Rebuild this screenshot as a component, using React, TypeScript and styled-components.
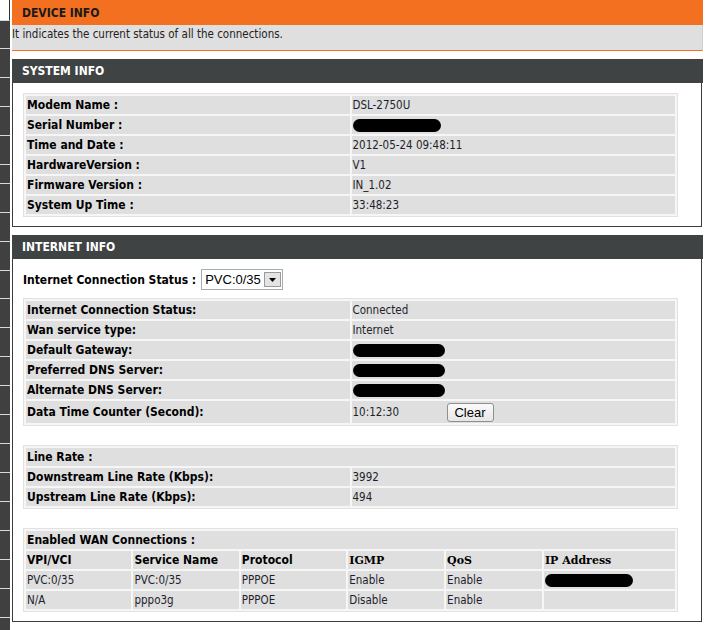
import React from 'react';
import styled, { createGlobalStyle } from 'styled-components';

const GlobalStyle = createGlobalStyle`
  html, body {
    margin: 0;
    padding: 0;
    background: #ffffff;
  }
  body {
    font-family: "DejaVu Sans Condensed", "Liberation Sans", sans-serif;
    font-size: 11.5px;
    color: #000;
  }
`;

const Page = styled.div`
  display: flex;
  align-items: flex-start;
  width: 711px;
  height: 630px;
  overflow: hidden;
`;

const Sidebar = styled.div`
  width: 10px;
  height: 630px;
  margin-right: 2px;
  background: #404040;
  display: flex;
  flex-direction: column;
`;

const NavItem = styled.div<{ $h: number; $top?: boolean }>`
  height: ${(p) => p.$h}px;
  flex: none;
  border-bottom: 1px solid #d8d8d8;
  background: ${(p) => (p.$top ? '#ffffff' : '#404040')};
  box-sizing: border-box;
  ${(p) => (p.$top ? 'border-right: 1px solid #333;' : '')}
`;

const Main = styled.div`
  width: 691px;
  display: flex;
  flex-direction: column;
`;

const TitleBar = styled.div`
  background: #f37021;
  height: 25px;
  line-height: 26px;
  padding-left: 10px;
  font-weight: bold;
  font-size: 12px;
  color: #1a1a1a;
`;

const Intro = styled.div`
  background: #dfdfdf;
  height: 26px;
  line-height: 17px;
  box-sizing: border-box;
  padding-top: 1px;
  border-bottom: 1px solid #f37021;
  border-right: 1px solid #d0d0d0;
  color: #222;
`;

const Section = styled.section`
  margin-top: 8px;
  display: flex;
  flex-direction: column;
`;

const SectionHead = styled.div`
  background: #404344;
  height: 24px;
  line-height: 25px;
  padding-left: 10px;
  font-weight: bold;
  font-size: 12px;
  color: #ffffff;
`;

const SectionBody = styled.div`
  border: 1px solid #3c3c3c;
  border-top: none;
  margin-right: 1px;
  padding: 10px 0 9px 10px;
`;

const Grid = styled.table`
  width: 655px;
  border-collapse: separate;
  border-spacing: 2px;
  background: #f6f6f6;
  border: 1px solid #e2e2e2;
  box-sizing: border-box;
  table-layout: fixed;
`;

const Cell = styled.td<{ $bold?: boolean; $serif?: boolean; $tall?: boolean }>`
  background: #dfdfdf;
  height: ${(p) => (p.$tall ? 22 : 18)}px;
  padding: 0 1px;
  box-sizing: border-box;
  white-space: nowrap;
  overflow: hidden;
  font-weight: ${(p) => (p.$bold ? 'bold' : 'normal')};
  font-family: ${(p) => (p.$serif ? '"DejaVu Serif", "Liberation Serif", serif' : 'inherit')};
  font-size: ${(p) => (p.$serif ? '11px' : p.$bold ? '12px' : '11.5px')};
  color: ${(p) => (p.$bold ? '#000' : '#1e1e2c')};
  vertical-align: middle;
`;

const Gap = styled.div`
  height: 19px;
`;

const Redacted = styled.span<{ $w: number }>`
  display: inline-block;
  width: ${(p) => p.$w}px;
  height: 13px;
  background: #000;
  border-radius: 7px;
  vertical-align: middle;
  filter: blur(0.4px);
`;

const StatusRow = styled.div`
  display: flex;
  align-items: center;
  gap: 5px;
  padding: 0 0 8px 0;
  font-weight: bold;
  font-size: 12px;
`;

const Select = styled.div`
  display: flex;
  align-items: center;
  height: 21px;
  width: 82px;
  box-sizing: border-box;
  border: 1px solid #a5acb2;
  font-family: "Liberation Sans", Arial, sans-serif;
  font-weight: normal;
  font-size: 13px;
  color: #000;
  padding-left: 3px;
  justify-content: space-between;
`;

const SelectArrow = styled.span`
  width: 17px;
  height: 15px;
  margin-right: 1px;
  background: #e4e4e4;
  border: 1px solid #9a9a9a;
  box-sizing: border-box;
  display: flex;
  align-items: center;
  justify-content: center;
`;

const ClearButton = styled.button`
  margin-left: 40px;
  height: 19px;
  width: 47px;
  padding: 0;
  font-family: "Liberation Sans", Arial, sans-serif;
  font-size: 13px;
  color: #000;
  background: linear-gradient(#fbfbfb, #e6e6e6);
  border: 1px solid #8f8f8f;
  border-radius: 3px;
  vertical-align: middle;
`;

const TimeValue = styled.span`
  display: inline-block;
  width: 54px;
`;

const systemRows: [string, React.ReactNode][] = [
  ['Modem Name :', 'DSL-2750U'],
  ['Serial Number :', <Redacted $w={88} />],
  ['Time and Date :', '2012-05-24 09:48:11'],
  ['HardwareVersion :', 'V1'],
  ['Firmware Version :', 'IN_1.02'],
  ['System Up Time :', '33:48:23'],
];

const internetRows: [string, React.ReactNode][] = [
  ['Internet Connection Status:', 'Connected'],
  ['Wan service type:', 'Internet'],
  ['Default Gateway:', <Redacted $w={92} />],
  ['Preferred DNS Server:', <Redacted $w={92} />],
  ['Alternate DNS Server:', <Redacted $w={92} />],
];

const wanRows = [
  ['PVC:0/35', 'PVC:0/35', 'PPPOE', 'Enable', 'Enable', 'ip'],
  ['N/A', 'pppo3g', 'PPPOE', 'Disable', 'Enable', ''],
];

const navHeights = [21, 28, 29, 29, 29, 29, 19, 29, 29, 29, 28, 29, 29, 29, 29, 29, 29, 29, 29, 29, 29, 29];

function App() {
  return (
    <>
      <GlobalStyle />
      <Page>
        <Sidebar>
          {navHeights.map((h, i) => (
            <NavItem key={i} $h={h} $top={i === 0} />
          ))}
        </Sidebar>
        <Main>
          <TitleBar>DEVICE INFO</TitleBar>
          <Intro>It indicates the current status of all the connections.</Intro>

          <Section>
            <SectionHead>SYSTEM INFO</SectionHead>
            <SectionBody>
              <Grid>
                <tbody>
                  {systemRows.map(([label, value]) => (
                    <tr key={label}>
                      <Cell $bold>{label}</Cell>
                      <Cell>{value}</Cell>
                    </tr>
                  ))}
                </tbody>
              </Grid>
            </SectionBody>
          </Section>

          <Section>
            <SectionHead>INTERNET INFO</SectionHead>
            <SectionBody>
              <StatusRow>
                Internet Connection Status :
                <Select>
                  PVC:0/35
                  <SelectArrow>
                    <svg width="7" height="4" viewBox="0 0 7 4">
                      <path d="M0 0h7L3.5 4z" fill="#000" />
                    </svg>
                  </SelectArrow>
                </Select>
              </StatusRow>
              <Grid>
                <tbody>
                  {internetRows.map(([label, value]) => (
                    <tr key={label}>
                      <Cell $bold>{label}</Cell>
                      <Cell>{value}</Cell>
                    </tr>
                  ))}
                  <tr>
                    <Cell $bold $tall>Data Time Counter (Second):</Cell>
                    <Cell $tall>
                      <TimeValue>10:12:30</TimeValue>
                      <ClearButton type="button">Clear</ClearButton>
                    </Cell>
                  </tr>
                </tbody>
              </Grid>
              <Gap />
              <Grid>
                <tbody>
                  <tr>
                    <Cell $bold colSpan={2}>Line Rate :</Cell>
                  </tr>
                  <tr>
                    <Cell $bold>Downstream Line Rate (Kbps):</Cell>
                    <Cell>3992</Cell>
                  </tr>
                  <tr>
                    <Cell $bold>Upstream Line Rate (Kbps):</Cell>
                    <Cell>494</Cell>
                  </tr>
                </tbody>
              </Grid>
              <Gap />
              <Grid>
                <colgroup>
                  <col style={{ width: '16.5%' }} />
                  <col style={{ width: '16.5%' }} />
                  <col style={{ width: '16.5%' }} />
                  <col style={{ width: '15%' }} />
                  <col style={{ width: '15%' }} />
                  <col style={{ width: '20.5%' }} />
                </colgroup>
                <tbody>
                  <tr>
                    <Cell $bold colSpan={6}>Enabled WAN Connections :</Cell>
                  </tr>
                  <tr>
                    <Cell $bold>VPI/VCI</Cell>
                    <Cell $bold>Service Name</Cell>
                    <Cell $bold>Protocol</Cell>
                    <Cell $bold $serif>IGMP</Cell>
                    <Cell $bold $serif>QoS</Cell>
                    <Cell $bold $serif>IP Address</Cell>
                  </tr>
                  {wanRows.map((row, r) => (
                    <tr key={r}>
                      {row.map((v, c) => (
                        <Cell key={c}>{v === 'ip' ? <Redacted $w={88} /> : v}</Cell>
                      ))}
                    </tr>
                  ))}
                </tbody>
              </Grid>
            </SectionBody>
          </Section>

          <Section>
            <SectionHead />
          </Section>
        </Main>
      </Page>
    </>
  );
}

export default App;
